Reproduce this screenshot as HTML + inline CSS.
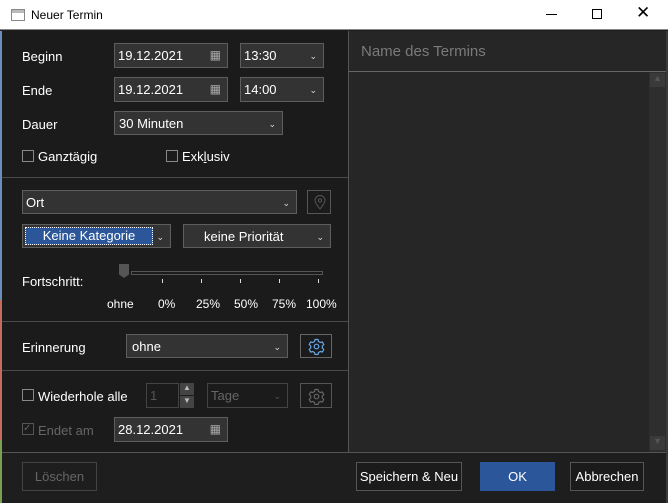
<!DOCTYPE html><html><head><style>
*{box-sizing:border-box;margin:0;padding:0}
body{width:668px;height:503px;background:#1e1e1e;font-family:"Liberation Sans",sans-serif;font-size:13px;color:#fff;position:relative;overflow:hidden}
.a{position:absolute}
.inp{position:absolute;background:#333;border:1px solid #5e5e5e;color:#fff;font-size:13px;padding-left:3px;line-height:23px}
.lbl{position:absolute;font-size:13px;color:#fff}
.chev{position:absolute;right:6px;top:1px;font-size:9px;color:#ddd}
.sep{position:absolute;left:2px;width:346px;height:1px;background:#4a4a4a}
.cb{position:absolute;width:12px;height:12px;border:1px solid #888}
.btn{position:absolute;border:1px solid #555;text-align:center;font-size:13px;color:#fff}
.tk{position:absolute;width:1px;height:4px;background:#ddd;top:279px}
.pl{position:absolute;top:297px;font-size:12px;color:#fff}
.gear{position:absolute;left:7px;top:3px}
</style></head><body>
<div class="a" style="left:0;top:0;width:668px;height:30px;background:#fff;border-bottom:1px solid #888"></div>
<div class="a" style="left:11px;top:9px;width:14px;height:12px;border:1px solid #888;background:linear-gradient(#bbb 3px,#fff 3px)"></div>
<div class="a" style="left:31px;top:8px;font-size:12px;color:#000">Neuer Termin</div>
<div class="a" style="left:546px;top:14px;width:11px;height:1px;background:#000"></div>
<div class="a" style="left:592px;top:9px;width:10px;height:10px;border:1px solid #000"></div>
<div class="a" style="left:636px;top:3px;font-size:17px;color:#000">✕</div>
<div class="a" style="left:0;top:31px;width:2px;height:472px;background:#6b8fb8"></div>
<div class="a" style="left:0;top:300px;width:2px;height:140px;background:#c96a5e"></div>
<div class="a" style="left:0;top:440px;width:2px;height:63px;background:#7aa050"></div>
<div class="a" style="left:2px;top:31px;width:346px;height:421px;background:#1b1b1b"></div>
<div class="a" style="left:348px;top:31px;width:1px;height:421px;background:#555"></div>
<div class="a" style="left:349px;top:31px;width:317px;height:421px;background:#262626"></div>
<div class="a" style="left:666px;top:31px;width:2px;height:472px;background:#3a3a3a"></div>
<div class="a" style="left:361px;top:43px;font-size:15px;color:#7a7a7a">Name des Termins</div>
<div class="a" style="left:349px;top:71px;width:317px;height:1px;background:#666"></div>
<div class="a" style="left:649px;top:72px;width:17px;height:380px;background:#2e2e2e"></div>
<div class="a" style="left:650px;top:73px;width:15px;height:14px;background:#3a3a3a;color:#555;font-size:9px;text-align:center">▲</div>
<div class="a" style="left:650px;top:436px;width:15px;height:14px;background:#3a3a3a;color:#555;font-size:9px;text-align:center">▼</div>
<div class="a" style="left:2px;top:452px;width:664px;height:1px;background:#555"></div>
<div class="a" style="left:2px;top:453px;width:664px;height:50px;background:#1e1e1e"></div>

<div class="lbl" style="left:22px;top:49px">Beginn</div>
<div class="inp" style="left:114px;top:43px;width:114px;height:25px">19.12.2021<span class="a" style="right:6px;top:0;color:#aaa;font-size:12px">▦</span></div>
<div class="inp" style="left:240px;top:43px;width:84px;height:25px">13:30<span class="chev">⌄</span></div>
<div class="lbl" style="left:22px;top:83px">Ende</div>
<div class="inp" style="left:114px;top:77px;width:114px;height:25px">19.12.2021<span class="a" style="right:6px;top:0;color:#aaa;font-size:12px">▦</span></div>
<div class="inp" style="left:240px;top:77px;width:84px;height:25px">14:00<span class="chev">⌄</span></div>
<div class="lbl" style="left:22px;top:117px">Dauer</div>
<div class="inp" style="left:114px;top:111px;width:169px;height:24px;padding-left:4px">30 Minuten<span class="chev">⌄</span></div>
<div class="cb" style="left:22px;top:150px"></div><div class="lbl" style="left:38px;top:149px">Ganztägig</div>
<div class="cb" style="left:166px;top:150px"></div><div class="lbl" style="left:182px;top:149px">Exk<u>l</u>usiv</div>
<div class="sep" style="top:177px"></div>
<div class="inp" style="left:22px;top:190px;width:275px;height:24px">Ort<span class="chev">⌄</span></div>
<div class="a" style="left:307px;top:190px;width:24px;height:24px;border:1px solid #555"><svg class="a" style="left:6px;top:4px" width="12" height="15" viewBox="0 0 12 15"><path d="M6 14C2 9 1 7 1 5.5a5 5 0 0 1 10 0C11 7 10 9 6 14Z" fill="none" stroke="#555"/><circle cx="6" cy="5.5" r="1.6" fill="none" stroke="#555"/></svg></div>
<div class="inp" style="left:22px;top:224px;width:149px;height:24px;padding:2px"><div style="width:128px;height:18px;background:#2b579a;border:1px dotted #fff;text-align:center;line-height:16px">Keine Kategorie</div><span class="chev">⌄</span></div>
<div class="inp" style="left:183px;top:224px;width:148px;height:24px;padding-left:20px">keine Priorität<span class="chev">⌄</span></div>
<div class="lbl" style="left:22px;top:274px">Fortschritt:</div>
<div class="a" style="left:131px;top:271px;width:192px;height:4px;border:1px solid #555"></div>
<div class="a" style="left:119px;top:264px;width:10px;height:14px;background:#555;clip-path:polygon(0 0,100% 0,100% 75%,50% 100%,0 75%)"></div>
<div class="tk" style="left:162px"></div><div class="tk" style="left:201px"></div><div class="tk" style="left:240px"></div><div class="tk" style="left:279px"></div><div class="tk" style="left:318px"></div>
<div class="pl" style="left:107px">ohne</div><div class="pl" style="left:158px">0%</div><div class="pl" style="left:196px">25%</div><div class="pl" style="left:234px">50%</div><div class="pl" style="left:272px">75%</div><div class="pl" style="left:306px">100%</div>
<div class="sep" style="top:321px"></div>
<div class="lbl" style="left:22px;top:340px">Erinnerung</div>
<div class="inp" style="left:126px;top:334px;width:162px;height:24px;padding-left:5px">ohne<span class="chev">⌄</span></div>
<div class="a" style="left:300px;top:334px;width:32px;height:24px;border:1px solid #666"><svg class="gear" width="17" height="17" viewBox="0 0 17 17"><path d="M7 1.5h3l.5 2 1.8 1 2-.6 1.5 2.6-1.5 1.5v2l1.5 1.5-1.5 2.6-2-.6-1.8 1-.5 2H7l-.5-2-1.8-1-2 .6-1.5-2.6 1.5-1.5v-2L1.2 6.5l1.5-2.6 2 .6 1.8-1z" fill="none" stroke="#6aa8e8" stroke-width="1.2" stroke-linejoin="round"/><circle cx="8.5" cy="8.5" r="2.3" fill="none" stroke="#6aa8e8" stroke-width="1.2"/></svg></div>
<div class="sep" style="top:370px"></div>
<div class="cb" style="left:22px;top:389px"></div><div class="lbl" style="left:38px;top:389px">Wiederhole alle</div>
<div class="inp" style="left:146px;top:383px;width:33px;height:25px;background:#1b1b1b;color:#555;border-color:#444">1</div>
<div class="a" style="left:180px;top:383px;width:14px;height:12px;background:#444;color:#bbb;font-size:8px;text-align:center">▲</div>
<div class="a" style="left:180px;top:396px;width:14px;height:12px;background:#444;color:#bbb;font-size:8px;text-align:center">▼</div>
<div class="inp" style="left:207px;top:383px;width:81px;height:25px;background:#1b1b1b;color:#666;border-color:#444">Tage<span class="chev" style="color:#555">⌄</span></div>
<div class="a" style="left:300px;top:383px;width:32px;height:25px;border:1px solid #555"><svg class="gear" style="top:4px" width="17" height="17" viewBox="0 0 17 17"><path d="M7 1.5h3l.5 2 1.8 1 2-.6 1.5 2.6-1.5 1.5v2l1.5 1.5-1.5 2.6-2-.6-1.8 1-.5 2H7l-.5-2-1.8-1-2 .6-1.5-2.6 1.5-1.5v-2L1.2 6.5l1.5-2.6 2 .6 1.8-1z" fill="none" stroke="#666" stroke-width="1.2" stroke-linejoin="round"/><circle cx="8.5" cy="8.5" r="2.3" fill="none" stroke="#666" stroke-width="1.2"/></svg></div>
<div class="cb" style="left:22px;top:423px;border-color:#555;color:#666;font-size:10px;line-height:10px">✓</div><div class="lbl" style="left:38px;top:423px;color:#666">Endet am</div>
<div class="inp" style="left:114px;top:417px;width:114px;height:25px">28.12.2021<span class="a" style="right:6px;top:0;color:#aaa;font-size:12px">▦</span></div>

<div class="btn" style="left:22px;top:462px;width:75px;height:29px;line-height:27px;color:#666;border-color:#444">Löschen</div>
<div class="btn" style="left:356px;top:462px;width:106px;height:29px;line-height:27px;background:#1b1b1b">Speichern &amp; Neu</div>
<div class="btn" style="left:480px;top:462px;width:75px;height:29px;line-height:29px;background:#2b579a;border:none">OK</div>
<div class="btn" style="left:570px;top:462px;width:74px;height:29px;line-height:27px;background:#1b1b1b">Abbrechen</div>
</body></html>
